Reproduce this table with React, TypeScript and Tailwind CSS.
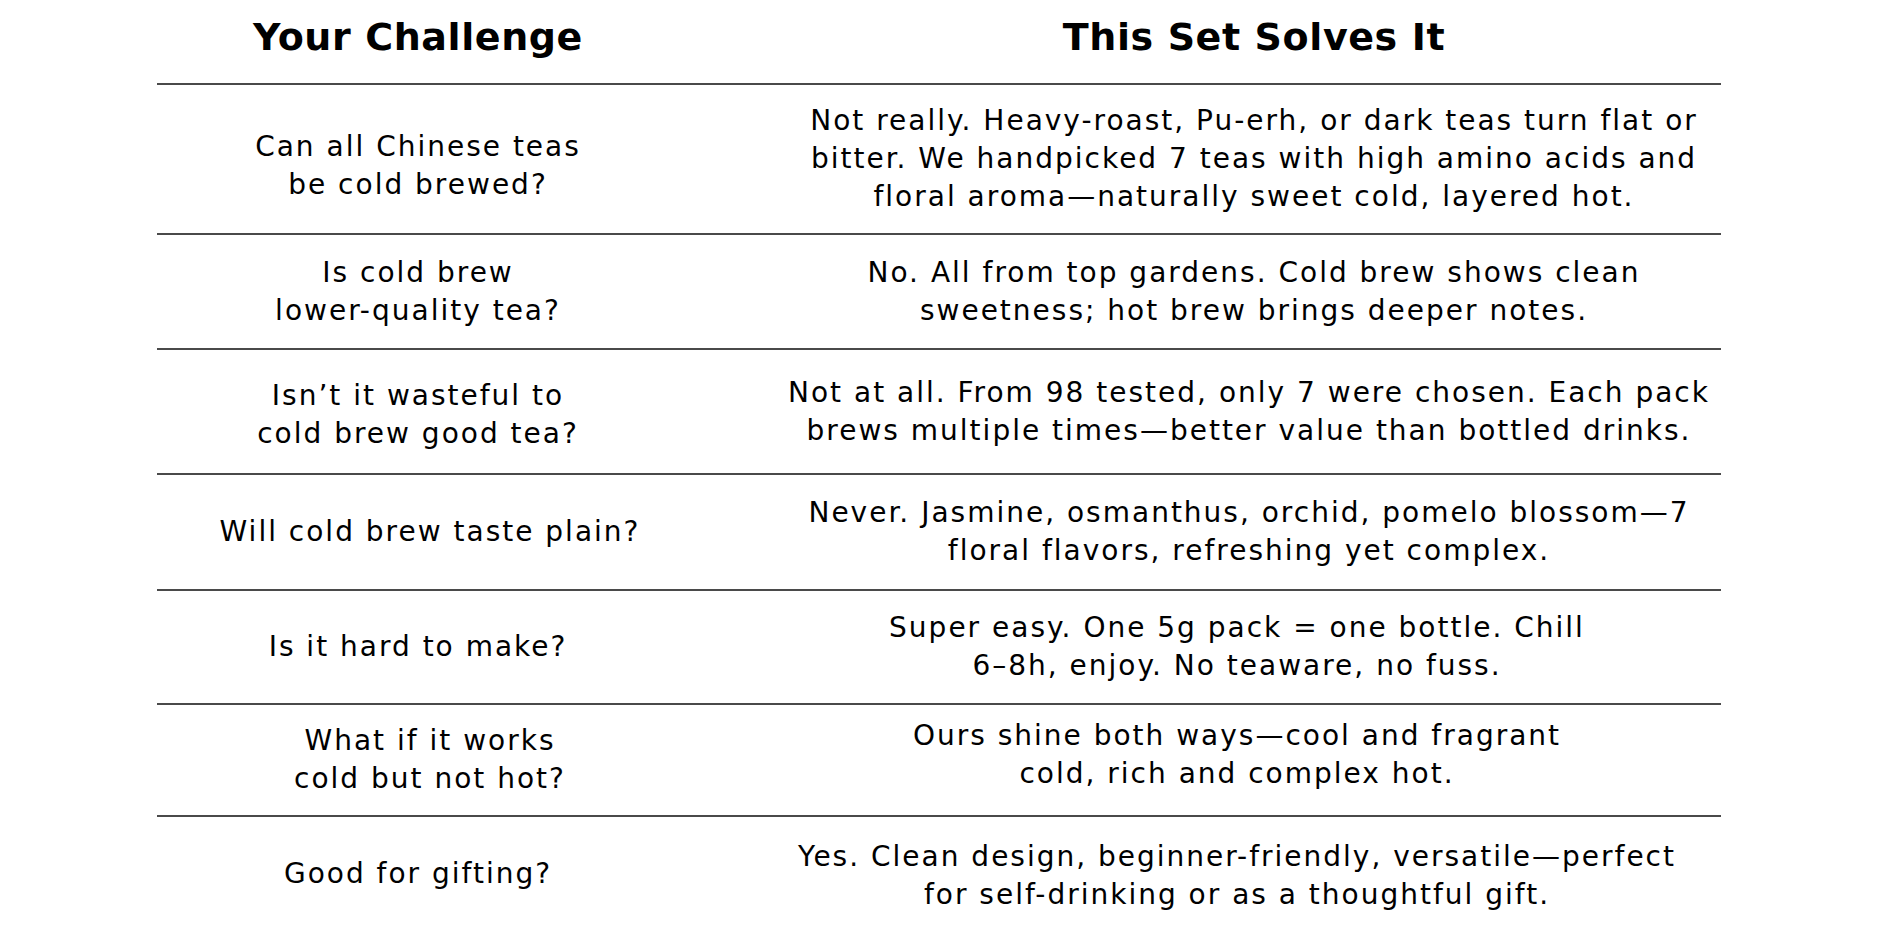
const rows = [
  {
    q: ['Can all Chinese teas', 'be cold brewed?'],
    a: [
      'Not really. Heavy-roast, Pu-erh, or dark teas turn flat or',
      'bitter. We handpicked 7 teas with high amino acids and',
      'floral aroma—naturally sweet cold, layered hot.',
    ],
    h: 'h-[150px]',
    qc: 'pt-[14px]',
    ac: 'pl-[108px]',
  },
  {
    q: ['Is cold brew', 'lower-quality tea?'],
    a: ['No. All from top gardens. Cold brew shows clean', 'sweetness; hot brew brings deeper notes.'],
    h: 'h-[115px]',
    qc: '',
    ac: 'pl-[108px]',
  },
  {
    q: ['Isn’t it wasteful to', 'cold brew good tea?'],
    a: ['Not at all. From 98 tested, only 7 were chosen. Each pack', 'brews multiple times—better value than bottled drinks.'],
    h: 'h-[125px]',
    qc: 'pt-[6px]',
    ac: 'pl-[98px]',
  },
  {
    q: ['Will cold brew taste plain?'],
    a: ['Never. Jasmine, osmanthus, orchid, pomelo blossom—7', 'floral flavors, refreshing yet complex.'],
    h: 'h-[116px]',
    qc: 'pl-[24px]',
    ac: 'pl-[98px]',
  },
  {
    q: ['Is it hard to make?'],
    a: ['Super easy. One 5g pack = one bottle. Chill', '6–8h, enjoy. No teaware, no fuss.'],
    h: 'h-[114px]',
    qc: '',
    ac: 'pl-[74px]',
  },
  {
    q: ['What if it works', 'cold but not hot?'],
    a: ['Ours shine both ways—cool and fragrant', 'cold, rich and complex hot.'],
    h: 'h-[112px]',
    qc: 'pl-[24px]',
    ac: 'pl-[74px] pb-[10px]',
  },
  {
    q: ['Good for gifting?'],
    a: ['Yes. Clean design, beginner-friendly, versatile—perfect', 'for self-drinking or as a thoughtful gift.'],
    h: 'h-[118px]',
    qc: 'pb-[4px]',
    ac: 'pl-[74px]',
  },
];

export default function App() {
  return (
    <div className="min-h-screen bg-white text-black font-['DejaVu_Sans',sans-serif]">
      <div className="mx-auto w-[1564px]">
        {/* header */}
        <div className="grid grid-cols-[522px_1fr] h-[85px] border-b-2 border-[#4a4a4a] text-[38px] font-bold leading-none tracking-[0.6px]">
          <div className="flex items-center justify-center pb-[10px]">Your Challenge</div>
          <div className="flex items-center justify-center pl-[108px] pb-[10px]">This Set Solves It</div>
        </div>

        {rows.map((r, i) => (
          <div
            key={i}
            className={`grid grid-cols-[522px_1fr] ${r.h} ${i < rows.length - 1 ? 'border-b-2 border-[#4a4a4a]' : ''} text-[28px] leading-[38px] tracking-[2px]`}
          >
            <div className={`flex flex-col items-center justify-center text-center whitespace-nowrap ${r.qc}`}>
              {r.q.map((l) => (
                <span key={l}>{l}</span>
              ))}
            </div>
            <div className={`flex flex-col items-center justify-center text-center whitespace-nowrap ${r.ac}`}>
              {r.a.map((l) => (
                <span key={l}>{l}</span>
              ))}
            </div>
          </div>
        ))}
      </div>
    </div>
  );
}
